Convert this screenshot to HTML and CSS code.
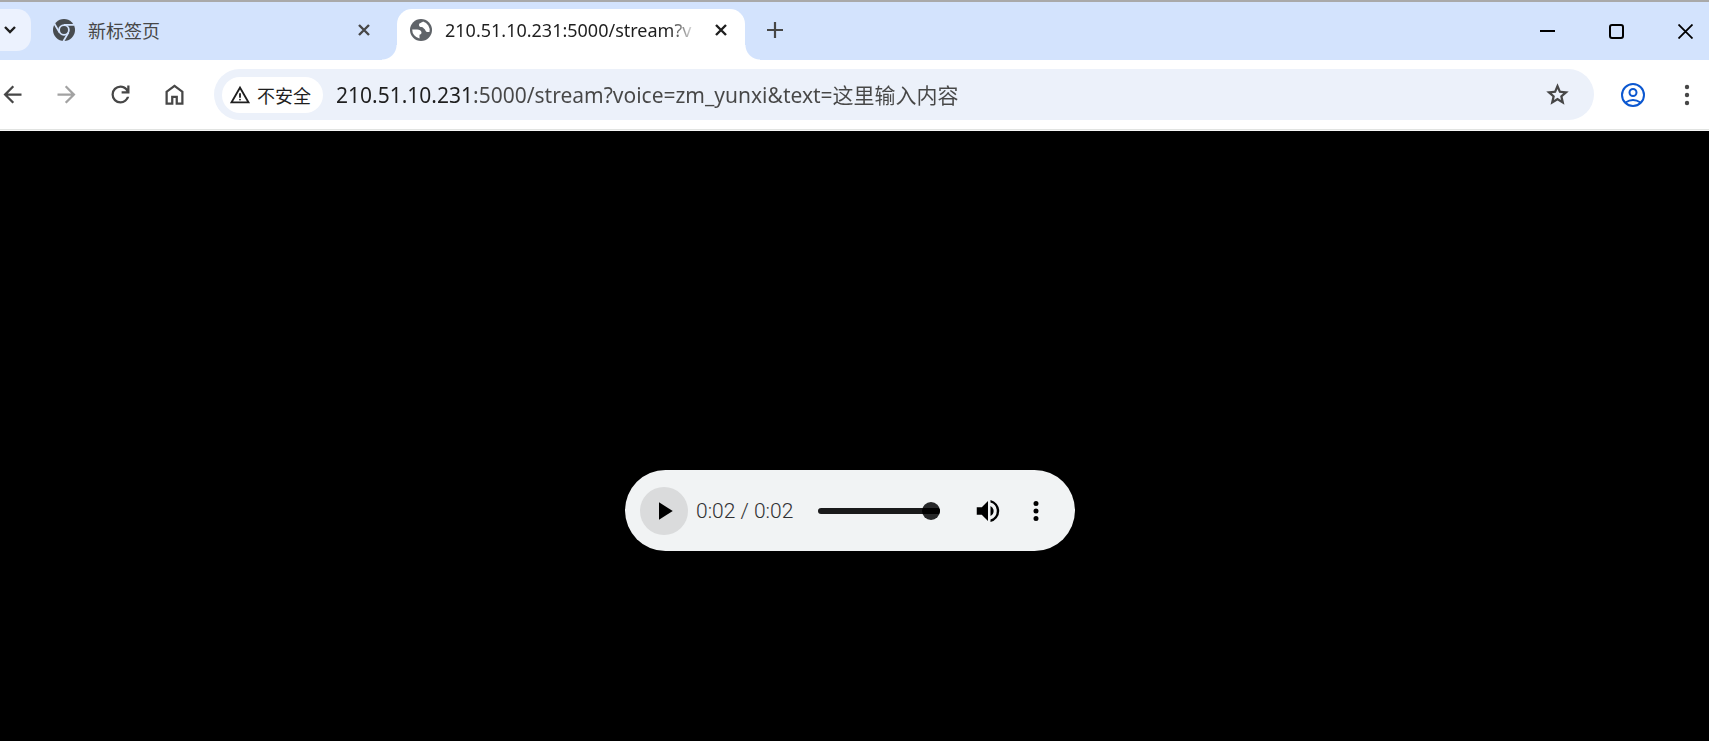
FILE: index.html
```
<!DOCTYPE html>
<html lang="zh-CN">
<head>
  <meta charset="UTF-8">
  <meta name="viewport" content="width=device-width, initial-scale=1.0">
  <title>210.51.10.231:5000/stream</title>
  <link rel="stylesheet" href="styles.css">
</head>
<body>
  <header class="tab-strip">
    <button class="tab-search" aria-label="搜索标签页">
      <svg width="12" height="12" viewBox="0 0 12 12"><path d="M1 3l5 5 5-5" fill="none" stroke="currentColor" stroke-width="2.4"/></svg>
    </button>

    <div class="tab">
      <svg class="favicon" viewBox="0 0 22 22">
        <circle cx="11" cy="11" r="11" fill="#474b4f"/>
        <circle cx="11" cy="11" r="4.9" fill="none" stroke="#d3e3fd" stroke-width="1.8"/>
        <path d="M11 5.9h10M6.6 13.6L1.4 4.8M15.4 13.6l-5 8.6" stroke="#d3e3fd" stroke-width="1.8"/>
      </svg>
      <span class="tab-title">新标签页</span>
      <button class="tab-close" aria-label="关闭">
        <svg width="12" height="12" viewBox="0 0 12 12"><path d="M1 1l10 10M11 1L1 11" stroke="currentColor" stroke-width="2.4"/></svg>
      </button>
    </div>

    <div class="tab active">
      <svg class="favicon" viewBox="0 0 22 22">
        <circle cx="11" cy="11" r="11" fill="#5f6368"/>
        <path d="M13 2.500C12 4 9 3.500 9 6c0 1.500 1 2 2.500 2s2 1.500 3 2 1 3 2.500 3h2.500A9 9 0 0 0 13 2.500zM2.200 10.500h5c2 0 4.300 1 4.300 3 0 1.500-1 2-2 2.200v3.800A9 9 0 0 1 2.200 10.500z" fill="#fff"/>
      </svg>
      <span class="tab-title">210.51.10.231:5000/stream?v</span>
      <button class="tab-close" aria-label="关闭">
        <svg width="12" height="12" viewBox="0 0 12 12"><path d="M1 1l10 10M11 1L1 11" stroke="currentColor" stroke-width="2.4"/></svg>
      </button>
    </div>

    <button class="new-tab" aria-label="打开新的标签页">
      <svg width="16" height="16" viewBox="0 0 16 16"><path d="M8 0v16M0 8h16" stroke="currentColor" stroke-width="2.2"/></svg>
    </button>

    <div class="window-controls">
      <button aria-label="最小化">
        <svg width="15" height="15" viewBox="0 0 15 15"><path d="M0 7h15" stroke="currentColor" stroke-width="2"/></svg>
      </button>
      <button aria-label="最大化">
        <svg width="15" height="15" viewBox="0 0 15 15"><rect x="1" y="1" width="13" height="13" rx="2" fill="none" stroke="currentColor" stroke-width="2"/></svg>
      </button>
      <button aria-label="关闭窗口">
        <svg width="15" height="15" viewBox="0 0 15 15"><path d="M0.500 0.500l14 14M14.500 0.500l-14 14" stroke="currentColor" stroke-width="1.800"/></svg>
      </button>
    </div>
  </header>

  <div class="toolbar">
    <nav class="nav-buttons">
      <button aria-label="后退">
        <svg class="icon" viewBox="0 0 24 24"><path d="M7.825 13l5.600 5.600L12 20l-8-8 8-8 1.425 1.400-5.600 5.600H20v2z"/></svg>
      </button>
      <button aria-label="前进" disabled>
        <svg class="icon" viewBox="0 0 24 24"><path d="M16.175 13H4v-2h12.175l-5.600-5.600L12 4l8 8-8 8-1.425-1.400z"/></svg>
      </button>
      <button aria-label="重新加载">
        <svg class="icon" viewBox="0 0 24 24"><path d="M12 20q-3.350 0-5.675-2.325T4 12t2.325-5.675T12 4q1.725 0 3.300.712T18 6.750V4h2v7h-7V9h4.200q-.8-1.400-2.187-2.200T12 6Q9.500 6 7.750 7.750T6 12t1.750 4.250T12 18q1.925 0 3.475-1.100T17.650 14h2.100q-.7 2.650-2.850 4.325T12 20"/></svg>
      </button>
      <button aria-label="主页">
        <svg class="icon" viewBox="0 0 24 24"><path d="M6 19h3v-6h6v6h3v-9l-6-4.500L6 10zm-2 2V9l8-6 8 6v12h-7v-6h-2v6z"/></svg>
      </button>
    </nav>

    <div class="omnibox">
      <button class="security-chip">
        <svg width="22" height="22" viewBox="0 0 24 24"><path d="M1 21L12 2l11 19zm3.450-2h15.100L12 6zM12 18q.425 0 .713-.288T13 17t-.288-.712T12 16t-.712.288T11 17t.288.713T12 18m-1-3h2v-5h-2z" fill="currentColor"/></svg>
        不安全
      </button>
      <input class="url" type="text" aria-label="地址栏" spellcheck="false" value="210.51.10.231:5000/stream?voice=zm_yunxi&amp;text=这里输入内容">
      <button class="bookmark" aria-label="为此标签页添加书签">
        <svg class="icon" viewBox="0 0 24 24"><path d="M8.850 16.825l3.150-1.900 3.150 1.900-.825-3.600 2.775-2.400-3.650-.325-1.450-3.400-1.450 3.400-3.650.325 2.775 2.400zM5.825 21l1.625-7.025L2 9.250l7.200-.625L12 2l2.800 6.625 7.200.625-5.450 4.725L18.175 21 12 17.275z"/></svg>
      </button>
    </div>

    <button class="profile" aria-label="个人资料">
      <svg width="24" height="24" viewBox="0 0 24 24" fill="none" stroke="currentColor" stroke-width="2"><circle cx="12" cy="12" r="11"/><circle cx="12" cy="9.500" r="3.500"/><path d="M4.500 19.500q7.500-5 15 0"/></svg>
    </button>
    <button class="menu" aria-label="菜单">
      <svg width="6" height="22" viewBox="0 0 6 22"><circle cx="3" cy="3" r="2.200"/><circle cx="3" cy="11" r="2.200"/><circle cx="3" cy="19" r="2.200"/></svg>
    </button>
  </div>

  <main class="media-page">
    <div class="player">
      <button class="play" aria-label="播放">
        <svg width="30" height="30" viewBox="0 0 24 24"><path d="M8 5v14l11-7z"/></svg>
      </button>
      <span class="time">0:02 / 0:02</span>
      <input class="timeline" type="range" aria-label="播放进度" min="0" max="2" value="2">
      <button class="volume" aria-label="静音">
        <svg width="30" height="30" viewBox="0 0 24 24"><path d="M3 9v6h4l5 5V4L7 9zm13.500 3A4.500 4.500 0 0 0 14 7.970v8.050A4.470 4.470 0 0 0 16.500 12zM14 3.230v2.060a7 7 0 0 1 0 13.420v2.060a9 9 0 0 0 0-17.540z"/></svg>
      </button>
      <button class="more" aria-label="更多选项">
        <svg width="30" height="30" viewBox="0 0 24 24"><path d="M12 8a2 2 0 1 0 0-4 2 2 0 0 0 0 4zm0 2a2 2 0 1 0 0 4 2 2 0 0 0 0-4zm0 6a2 2 0 1 0 0 4 2 2 0 0 0 0-4z"/></svg>
      </button>
    </div>
  </main>
</body>
</html>
```
FILE: styles.css
```
* {
  box-sizing: border-box;
}
body {
  margin: 0;
  min-height: 100vh;
  display: flex;
  flex-direction: column;
  overflow: hidden;
  background-color: #000;
  font-family: "Noto Sans", "Noto Sans CJK SC", sans-serif;
  font-size: 18px;
  color: #1f1f1f;
}
button {
  display: flex;
  align-items: center;
  justify-content: center;
  flex-shrink: 0;
  padding: 0;
  border: none;
  background: none;
  color: inherit;
  font: inherit;
}
svg {
  display: block;
  flex-shrink: 0;
}

/* tab strip */
.tab-strip {
  display: flex;
  align-items: flex-start;
  height: 60px;
  padding-top: 7px;
  border-top: 2px solid #a9a9a9;
  background-color: #d3e3fd;
}
.tab-search {
  width: 31px;
  height: 42px;
  padding-right: 11px;
  border-radius: 0 14px 14px 0;
  background-color: #ecf2fe;
}
.tab {
  display: flex;
  align-items: center;
  width: 348px;
  height: 42px;
  padding: 0 18px 0 13px;
  color: #474747;
}
.tab-search + .tab {
  margin-left: 9px;
}
.tab.active {
  position: relative;
  height: 51px;
  padding-bottom: 9px;
  margin-left: 9px;
  border-radius: 15px 15px 0 0;
  background-color: #fff;
  color: #1f1f1f;
}
.tab.active::before,
.tab.active::after {
  content: "";
  position: absolute;
  bottom: 0;
  width: 15px;
  height: 15px;
}
.tab.active::before {
  right: 100%;
  background: radial-gradient(circle at 0 0, transparent 14px, #fff 15px);
}
.tab.active::after {
  left: 100%;
  background: radial-gradient(circle at 100% 0, transparent 14px, #fff 15px);
}
.favicon {
  width: 22px;
  height: 22px;
}
.tab-title {
  flex: 1;
  margin: 0 18px 0 13px;
  overflow: hidden;
  white-space: nowrap;
}
.active .tab-title {
  -webkit-mask-image: linear-gradient(to left, transparent, #000 28px);
  mask-image: linear-gradient(to left, transparent, #000 28px);
}
.new-tab {
  width: 42px;
  height: 42px;
  margin-left: 9px;
  color: #474747;
}
.window-controls {
  display: flex;
  margin-left: auto;
  color: #000;
}
.window-controls button {
  width: 69px;
  height: 44px;
}
.window-controls button:last-child {
  width: 58px;
  padding-right: 16px;
  padding-left: 27px;
}

/* toolbar */
.toolbar {
  display: flex;
  align-items: center;
  height: 70px;
  border-bottom: 1px solid #e1e3e1;
  background-color: #fff;
  color: #474747;
}
.nav-buttons {
  display: flex;
  margin-left: -15px;
}
.nav-buttons button {
  width: 54px;
  height: 54px;
}
.nav-buttons button:disabled {
  opacity: 0.5;
}
.icon {
  width: 27px;
  height: 27px;
  fill: currentColor;
}
.omnibox {
  flex: 1;
  display: flex;
  align-items: center;
  height: 51px;
  margin-left: 13px;
  padding: 0 23px 0 8px;
  border-radius: 26px;
  background-color: #ecf1fa;
}
.security-chip {
  gap: 6px;
  height: 36px;
  padding: 0 12px 0 7px;
  border-radius: 18px;
  background-color: #fff;
  color: #1f1f1f;
}
.url {
  flex: 1;
  min-width: 0;
  margin-left: 13px;
  padding: 0 0 2px;
  border: none;
  outline: none;
  font: inherit;
  font-size: 21px;
  color: transparent;
  /* the host is darker than the rest of the address */
  background: linear-gradient(to right, #1f1f1f 138px, #474747 138px);
  -webkit-background-clip: text;
  background-clip: text;
}
.profile {
  margin-left: 27px;
  color: #0b57d0;
}
.menu {
  margin: 0 19px 0 39px;
}
.menu svg {
  fill: currentColor;
}

/* media page */
.media-page {
  flex: 1;
  display: flex;
  align-items: flex-start;
  justify-content: center;
  padding: 339px 9px 0 0;
  border-top: 1px solid #f7f7f7;
  background-color: #000;
}
.player {
  display: flex;
  align-items: center;
  width: 450px;
  height: 81px;
  padding: 0 24px 0 15px;
  border-radius: 41px;
  background-color: #f1f3f4;
  color: #000;
}
.play {
  width: 48px;
  height: 48px;
  border-radius: 50%;
  background-color: #dadbdc;
}
.time {
  margin-left: 8px;
  font-family: Roboto, sans-serif;
  font-size: 21px;
  font-weight: 300;
  white-space: nowrap;
  color: #303133;
}
.timeline {
  flex: 1;
  min-width: 0;
  height: 18px;
  margin: 0 33px 0 25px;
  -webkit-appearance: none;
  appearance: none;
  background: none;
}
.timeline::-webkit-slider-runnable-track {
  height: 6px;
  border-radius: 3px;
  background-color: #1a1a1b;
}
.timeline::-webkit-slider-thumb {
  -webkit-appearance: none;
  width: 18px;
  height: 18px;
  margin-top: -6px;
  border-radius: 50%;
  background: linear-gradient(#272829 6px, #000 6px, #000 12px, #272829 12px);
}
.more {
  margin-left: 18px;
}
```
